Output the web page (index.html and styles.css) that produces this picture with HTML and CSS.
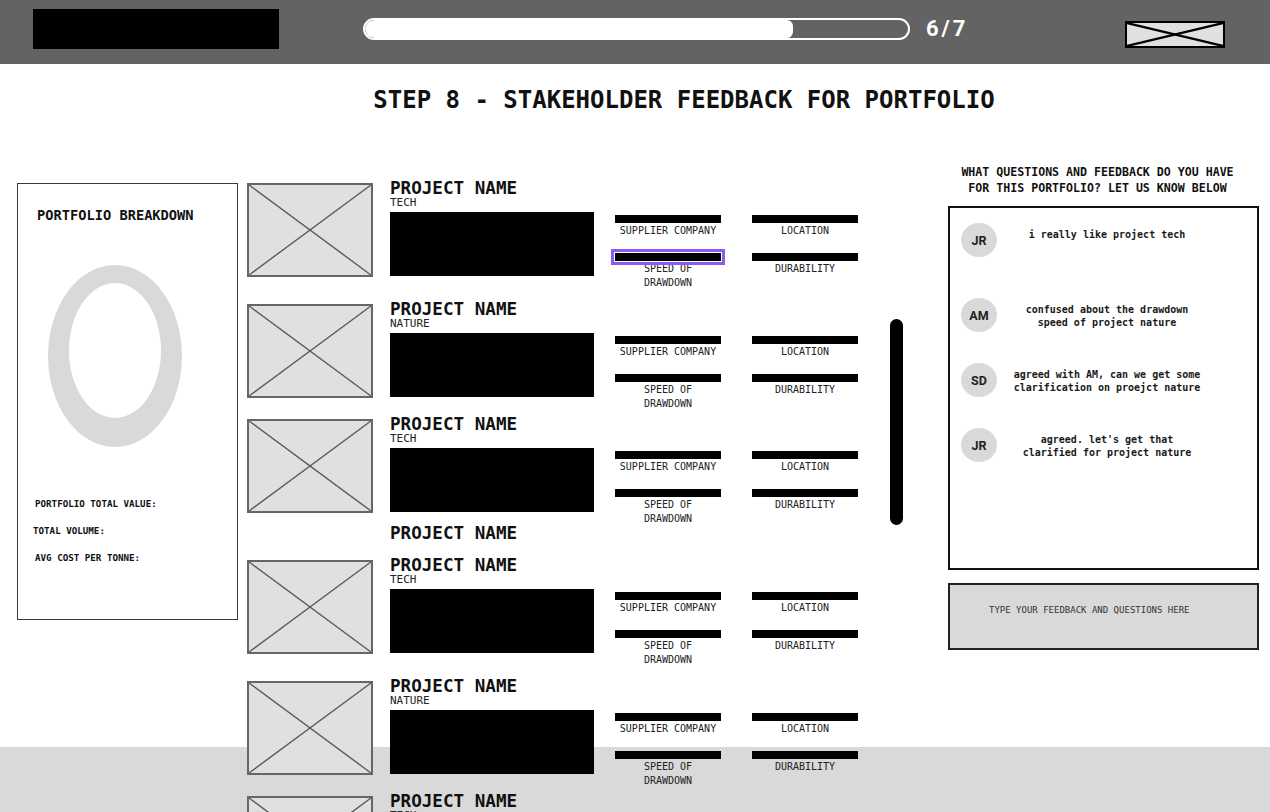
FILE: index.html
```html
<!DOCTYPE html>
<html lang="en">
<head>
<meta charset="utf-8">
<title>Step 8 - Stakeholder feedback for portfolio</title>
<link rel="stylesheet" href="styles.css">
</head>
<body>
<header class="topbar">
  <div class="logo"></div>
  <div class="progress"><div class="progress-fill" style="width:428px"></div></div>
  <span class="step-count">6/7</span>
  <div class="close-img">
    <svg viewBox="0 0 96 23" preserveAspectRatio="none"><line x1="0" y1="0" x2="96" y2="23"/><line x1="0" y1="23" x2="96" y2="0"/></svg>
  </div>
</header>

<main class="page">
  <h1 class="title">STEP 8 - STAKEHOLDER FEEDBACK FOR PORTFOLIO</h1>
  <div class="content">
    <aside class="breakdown">
      <h2 class="breakdown-title">PORTFOLIO BREAKDOWN</h2>
      <svg class="donut" width="134" height="182" viewBox="0 0 134 182"><path fill-rule="evenodd" d="M0,91 a67,91 0 1,0 134,0 a67,91 0 1,0 -134,0 Z M21,85.5 a46,67.5 0 1,0 92,0 a46,67.5 0 1,0 -92,0 Z"/></svg>
      <ul class="stats">
        <li>PORTFOLIO TOTAL VALUE:</li>
        <li class="stat-shift">TOTAL VOLUME:</li>
        <li>AVG COST PER TONNE:</li>
      </ul>
    </aside>

    <section class="projects">
      <div class="row">
        <div class="thumb"><svg viewBox="0 0 122 90" preserveAspectRatio="none"><line x1="0" y1="0" x2="122" y2="90"/><line x1="0" y1="90" x2="122" y2="0"/></svg></div>
        <div class="info"><div class="project-name">PROJECT NAME</div><div class="project-type">TECH</div><div class="project-img"></div></div>
        <div class="attrs">
          <div class="attr"><div class="bar"></div><div class="attr-label">SUPPLIER COMPANY</div></div>
          <div class="attr"><div class="bar"></div><div class="attr-label">LOCATION</div></div>
          <div class="attr"><div class="bar bar-selected"></div><div class="attr-label">SPEED OF<br>DRAWDOWN</div></div>
          <div class="attr"><div class="bar"></div><div class="attr-label">DURABILITY</div></div>
        </div>
      </div>
      <div class="row">
        <div class="thumb"><svg viewBox="0 0 122 90" preserveAspectRatio="none"><line x1="0" y1="0" x2="122" y2="90"/><line x1="0" y1="90" x2="122" y2="0"/></svg></div>
        <div class="info"><div class="project-name">PROJECT NAME</div><div class="project-type">NATURE</div><div class="project-img"></div></div>
        <div class="attrs">
          <div class="attr"><div class="bar"></div><div class="attr-label">SUPPLIER COMPANY</div></div>
          <div class="attr"><div class="bar"></div><div class="attr-label">LOCATION</div></div>
          <div class="attr"><div class="bar"></div><div class="attr-label">SPEED OF<br>DRAWDOWN</div></div>
          <div class="attr"><div class="bar"></div><div class="attr-label">DURABILITY</div></div>
        </div>
      </div>
      <div class="row near">
        <div class="thumb"><svg viewBox="0 0 122 90" preserveAspectRatio="none"><line x1="0" y1="0" x2="122" y2="90"/><line x1="0" y1="90" x2="122" y2="0"/></svg></div>
        <div class="info"><div class="project-name">PROJECT NAME</div><div class="project-type">TECH</div><div class="project-img"></div></div>
        <div class="attrs">
          <div class="attr"><div class="bar"></div><div class="attr-label">SUPPLIER COMPANY</div></div>
          <div class="attr"><div class="bar"></div><div class="attr-label">LOCATION</div></div>
          <div class="attr"><div class="bar"></div><div class="attr-label">SPEED OF<br>DRAWDOWN</div></div>
          <div class="attr"><div class="bar"></div><div class="attr-label">DURABILITY</div></div>
        </div>
      </div>
      <div class="project-name orphan">PROJECT NAME</div>
      <div class="row">
        <div class="thumb"><svg viewBox="0 0 122 90" preserveAspectRatio="none"><line x1="0" y1="0" x2="122" y2="90"/><line x1="0" y1="90" x2="122" y2="0"/></svg></div>
        <div class="info"><div class="project-name">PROJECT NAME</div><div class="project-type">TECH</div><div class="project-img"></div></div>
        <div class="attrs">
          <div class="attr"><div class="bar"></div><div class="attr-label">SUPPLIER COMPANY</div></div>
          <div class="attr"><div class="bar"></div><div class="attr-label">LOCATION</div></div>
          <div class="attr"><div class="bar"></div><div class="attr-label">SPEED OF<br>DRAWDOWN</div></div>
          <div class="attr"><div class="bar"></div><div class="attr-label">DURABILITY</div></div>
        </div>
      </div>
      <div class="row wide">
        <div class="thumb"><svg viewBox="0 0 122 90" preserveAspectRatio="none"><line x1="0" y1="0" x2="122" y2="90"/><line x1="0" y1="90" x2="122" y2="0"/></svg></div>
        <div class="info"><div class="project-name">PROJECT NAME</div><div class="project-type">NATURE</div><div class="project-img"></div></div>
        <div class="attrs">
          <div class="attr"><div class="bar"></div><div class="attr-label">SUPPLIER COMPANY</div></div>
          <div class="attr"><div class="bar"></div><div class="attr-label">LOCATION</div></div>
          <div class="attr"><div class="bar"></div><div class="attr-label">SPEED OF<br>DRAWDOWN</div></div>
          <div class="attr"><div class="bar"></div><div class="attr-label">DURABILITY</div></div>
        </div>
      </div>
      <div class="row near">
        <div class="thumb"><svg viewBox="0 0 122 90" preserveAspectRatio="none"><line x1="0" y1="0" x2="122" y2="90"/><line x1="0" y1="90" x2="122" y2="0"/></svg></div>
        <div class="info"><div class="project-name">PROJECT NAME</div><div class="project-type">TECH</div><div class="project-img"></div></div>
        <div class="attrs">
          <div class="attr"><div class="bar"></div><div class="attr-label">SUPPLIER COMPANY</div></div>
          <div class="attr"><div class="bar"></div><div class="attr-label">LOCATION</div></div>
          <div class="attr"><div class="bar"></div><div class="attr-label">SPEED OF<br>DRAWDOWN</div></div>
          <div class="attr"><div class="bar"></div><div class="attr-label">DURABILITY</div></div>
        </div>
      </div>
    </section>

    <div class="scrollbar"></div>

    <section class="feedback">
      <h2 class="feedback-title">WHAT QUESTIONS AND FEEDBACK DO YOU HAVE<br>FOR THIS PORTFOLIO? LET US KNOW BELOW</h2>
      <div class="chat">
        <div class="msg msg-first">
          <div class="avatar">JR</div>
          <p class="msg-text">i really like project tech</p>
        </div>
        <div class="msg">
          <div class="avatar">AM</div>
          <p class="msg-text">confused about the drawdown<br>speed of project nature</p>
        </div>
        <div class="msg">
          <div class="avatar">SD</div>
          <p class="msg-text">agreed with AM, can we get some<br>clarification on proejct nature</p>
        </div>
        <div class="msg">
          <div class="avatar">JR</div>
          <p class="msg-text">agreed. let's get that<br>clarified for project nature</p>
        </div>
      </div>
      <div class="composer">TYPE YOUR FEEDBACK AND QUESTIONS HERE</div>
    </section>
  </div>
</main>

<footer class="footer"></footer>
</body>
</html>
```

FILE: styles.css
```css
* { box-sizing: border-box; }

html, body {
  margin: 0;
  padding: 0;
}

body {
  width: 1270px;
  height: 812px;
  overflow: hidden;
  background: #ffffff;
  color: #111111;
  font-family: "DejaVu Sans Mono", "Liberation Mono", monospace;
}

/* ---------- top bar ---------- */
.topbar {
  height: 64px;
  background: #636363;
  display: flex;
  align-items: flex-start;
}

.logo {
  margin: 9px 0 0 33px;
  width: 246px;
  height: 40px;
  background: #000000;
}

.progress {
  margin: 18px 0 0 84px;
  width: 547px;
  height: 22px;
  border: 2px solid #ffffff;
  border-radius: 11px;
  overflow: hidden;
}

.progress-fill {
  height: 100%;
  background: #ffffff;
  border-radius: 10px 7px 7px 10px;
}

.step-count {
  margin: 15px 0 0 16px;
  font-family: Roboto, "Liberation Sans", sans-serif;
  font-weight: 700;
  font-size: 22px;
  line-height: 28px;
  letter-spacing: 3px;
  color: #ffffff;
}

.close-img {
  margin: 21px 45px 0 auto;
  width: 100px;
  height: 27px;
  border: 2px solid #000000;
  background: #e0e0e0;
}

.close-img svg {
  display: block;
  width: 100%;
  height: 100%;
}

.close-img line {
  stroke: #000000;
  stroke-width: 2.2;
}

/* ---------- page ---------- */
.page {
  height: 683px;
}

.title {
  margin: 0;
  padding: 22px 0 0 98px;
  font-size: 24px;
  line-height: 28px;
  font-weight: 700;
  text-align: center;
  color: #111111;
}

.content {
  margin-top: 46px;
  display: flex;
  align-items: flex-start;
}

/* ---------- breakdown ---------- */
.breakdown {
  margin: 23px 0 0 17px;
  width: 221px;
  height: 437px;
  border: 1px solid #3a3a3a;
  flex: none;
}

.breakdown-title {
  margin: 23px 0 0 19px;
  font-size: 13.7px;
  line-height: 16px;
  font-weight: 700;
}

.donut {
  display: block;
  margin: 42px 0 0 30px;
  fill: #d9d9d9;
}

.stats {
  list-style: none;
  margin: 43px 0 0 17px;
  padding: 0;
}

.stats li {
  font-size: 9.2px;
  line-height: 27px;
  font-weight: 700;
}

.stats .stat-shift {
  margin-left: -2px;
}

/* ---------- projects ---------- */
.projects {
  position: relative;
  z-index: 1;
  margin: 20px 0 0 9px;
  width: 611px;
  flex: none;
}

.row {
  display: flex;
  align-items: flex-start;
  height: 97px;
}

.row + .row,
.row.wide {
  margin-top: 24px;
}

.row.near {
  margin-top: 18px;
}

.orphan {
  margin: 12px 0 0 143px;
}

.orphan + .row {
  margin-top: 15px;
}

.thumb {
  margin-top: 3px;
  width: 126px;
  height: 94px;
  border: 2px solid #666666;
  background: #e0e0e0;
  flex: none;
}

.thumb svg {
  display: block;
  width: 100%;
  height: 100%;
}

.thumb line {
  stroke: #5a5a5a;
  stroke-width: 1.4;
}

.info {
  margin-left: 17px;
  width: 204px;
  flex: none;
}

.project-name {
  font-size: 17.6px;
  line-height: 17px;
  font-weight: 700;
  color: #111111;
}

.project-type {
  font-size: 11px;
  line-height: 11px;
  color: #222222;
}

.project-img {
  margin-top: 4px;
  width: 204px;
  height: 64px;
  background: #000000;
}

.attrs {
  margin: 35px 0 0 21px;
  display: grid;
  grid-template-columns: 106px 106px;
  column-gap: 31px;
  row-gap: 15px;
}

.bar {
  height: 8px;
  background: #000000;
}

.bar-selected {
  outline: 3px solid #8a5cf6;
  outline-offset: 1px;
}

.attr-label {
  margin-top: 1px;
  font-size: 10px;
  line-height: 14px;
  text-align: center;
  color: #222222;
}

/* ---------- scrollbar ---------- */
.scrollbar {
  margin: 159px 0 0 32px;
  width: 13px;
  height: 206px;
  border-radius: 7px;
  background: #000000;
  flex: none;
}

/* ---------- feedback ---------- */
.feedback {
  margin: 4px 0 0 45px;
  width: 311px;
  flex: none;
}

.feedback-title {
  margin: 0;
  padding-right: 12px;
  font-size: 11.6px;
  line-height: 16px;
  font-weight: 700;
  text-align: center;
}

.chat {
  margin-top: 10px;
  height: 364px;
  border: 2px solid #111111;
  padding: 15px 0 0 11px;
  display: flex;
  flex-direction: column;
  gap: 31px;
}

.msg {
  display: flex;
  align-items: flex-start;
}

.msg-first {
  margin-bottom: 10px;
}

.avatar {
  width: 36px;
  height: 34px;
  border-radius: 50%;
  background: #d9d9d9;
  display: flex;
  align-items: center;
  justify-content: center;
  font-family: Roboto, "Liberation Sans", sans-serif;
  font-weight: 700;
  font-size: 12.5px;
  color: #222222;
  flex: none;
}

.msg-text {
  margin: 5px 0 0 4px;
  width: 212px;
  font-size: 10px;
  line-height: 13px;
  font-weight: 700;
  text-align: center;
  color: #1a1a1a;
}

.composer {
  margin-top: 13px;
  height: 67px;
  border: 2px solid #222222;
  background: #d9d9d9;
  padding: 19px 0 0 39px;
  font-size: 9px;
  line-height: 12px;
  color: #333333;
}

/* ---------- footer ---------- */
.footer {
  height: 65px;
  background: #d9d9d9;
}
```
